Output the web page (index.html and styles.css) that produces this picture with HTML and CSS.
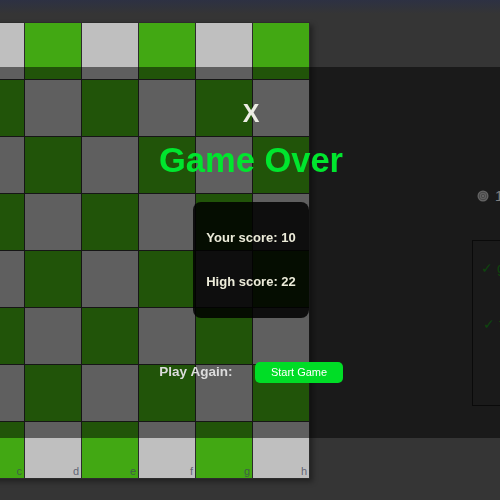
FILE: index.html
```html
<!DOCTYPE html>
<html lang="en">
<head>
<meta charset="utf-8">
<title>Game Over</title>
<link rel="stylesheet" href="styles.css">
</head>
<body>
<div class="page">
  <div class="board">
    <div class="cell l"></div><div class="cell d"></div><div class="cell l"></div><div class="cell d"></div><div class="cell l"></div><div class="cell d"></div><div class="cell l"></div><div class="cell d"></div>
    <div class="cell d"></div><div class="cell l"></div><div class="cell d"></div><div class="cell l"></div><div class="cell d"></div><div class="cell l"></div><div class="cell d"></div><div class="cell l"></div>
    <div class="cell l"></div><div class="cell d"></div><div class="cell l"></div><div class="cell d"></div><div class="cell l"></div><div class="cell d"></div><div class="cell l"></div><div class="cell d"></div>
    <div class="cell d"></div><div class="cell l"></div><div class="cell d"></div><div class="cell l"></div><div class="cell d"></div><div class="cell l"></div><div class="cell d"></div><div class="cell l"></div>
    <div class="cell l"></div><div class="cell d"></div><div class="cell l"></div><div class="cell d"></div><div class="cell l"></div><div class="cell d"></div><div class="cell l"></div><div class="cell d"></div>
    <div class="cell d"></div><div class="cell l"></div><div class="cell d"></div><div class="cell l"></div><div class="cell d"></div><div class="cell l"></div><div class="cell d"></div><div class="cell l"></div>
    <div class="cell l"></div><div class="cell d"></div><div class="cell l"></div><div class="cell d"></div><div class="cell l"></div><div class="cell d"></div><div class="cell l"></div><div class="cell d"></div>
    <div class="cell d"></div><div class="cell l"></div><div class="cell d"><span class="file">c</span></div><div class="cell l"><span class="file">d</span></div><div class="cell d"><span class="file">e</span></div><div class="cell l"><span class="file">f</span></div><div class="cell d"><span class="file">g</span></div><div class="cell l"><span class="file">h</span></div>
  </div>
  <aside class="side">
    <div class="stats">
      <svg class="target" width="12" height="12" viewBox="0 0 12 12" aria-hidden="true">
        <circle cx="6" cy="6" r="5.5" fill="#c8c8c8"/>
        <circle cx="6" cy="6" r="3.8" fill="none" stroke="#8a8a8a" stroke-width="1"/>
        <circle cx="6" cy="6" r="1.8" fill="none" stroke="#8a8a8a" stroke-width="1"/>
      </svg>
      <span class="count">1</span>
    </div>
    <div class="moves">
      <div class="move">✓ g4</div>
      <div class="move alt">✓ f5</div>
    </div>
  </aside>
</div>

<div class="overlay">
  <div class="close">X</div>
  <h1 class="title">Game Over</h1>
  <div class="scores">
    <p>Your score: 10</p>
    <p>High score: 22</p>
  </div>
  <div class="again">
    <span class="again-label">Play Again:</span>
    <button class="start">Start Game</button>
  </div>
</div>
</body>
</html>
```

FILE: styles.css
```css
html, body {
  margin: 0;
  height: 100%;
}

body {
  overflow: hidden;
  background: linear-gradient(to bottom, #2d3143 0px, #353535 14px) no-repeat, #353535;
  font-family: "Liberation Sans", Arial, sans-serif;
}

.page {
  display: flex;
  align-items: flex-start;
}

.board {
  flex: none;
  margin: 22px 0 0 -147px;
  display: grid;
  grid-template-columns: repeat(8, 56px);
  grid-auto-rows: 56px;
  gap: 1px;
  padding: 1px;
  background: #2c2c2c;
  box-shadow: 3px 3px 5px rgba(0, 0, 0, 0.35);
}

.cell {
  display: flex;
  align-items: flex-end;
  justify-content: flex-end;
  padding: 0 2px 1px 0;
  box-sizing: border-box;
}

.cell.l { background: #bfbfbf; }
.cell.d { background: #42a813; }

.file {
  font-size: 11px;
  line-height: 11px;
  color: rgba(62, 68, 88, 0.75);
}

.side {
  flex: none;
  margin: 188px 0 0 162px;
  display: flex;
  flex-direction: column;
}

.stats {
  display: flex;
  align-items: center;
  gap: 6px;
  margin-left: 5px;
  height: 16px;
  font-size: 15px;
  line-height: 16px;
  color: #ffffff;
}

.target { display: block; }

.moves {
  margin-top: 36px;
  width: 200px;
  height: 166px;
  box-sizing: border-box;
  border: 1px solid #141414;
  padding-top: 18px;
}

.move {
  padding-left: 8px;
  font-size: 14px;
  line-height: 18px;
  color: #1a8c1a;
}

.move.alt {
  margin-top: 38px;
  padding-left: 10px;
}

.overlay {
  position: fixed;
  left: 0;
  right: 0;
  top: 67px;
  height: 371px;
  box-sizing: border-box;
  padding: 34px 0 0 2px;
  background: rgba(0, 0, 0, 0.5);
  display: flex;
  flex-direction: column;
  align-items: center;
  font-family: "Liberation Sans", Arial, sans-serif;
}

.close {
  font-size: 25px;
  line-height: 25px;
  font-weight: bold;
  color: #ececE4;
}

.title {
  margin: 17px 0 0;
  font-size: 34.5px;
  line-height: 34.5px;
  font-weight: bold;
  color: #00e62e;
}

.scores {
  margin-top: 24px;
  width: 116px;
  box-sizing: border-box;
  padding: 28px 0;
  display: flex;
  flex-direction: column;
  gap: 28px;
  background: rgba(0, 0, 0, 0.85);
  border-radius: 8px;
  text-align: center;
}

.scores p {
  margin: 0;
  font-size: 13px;
  line-height: 16px;
  font-weight: bold;
  color: #ecebd9;
}

.again {
  margin-top: 44px;
  display: flex;
  align-items: baseline;
  gap: 23px;
}

.again-label {
  font-size: 13.5px;
  line-height: 16px;
  font-weight: bold;
  color: #dcdcdc;
}

.start {
  height: 21px;
  padding: 0 15.5px;
  border: none;
  border-radius: 5px;
  background: #00dd26;
  color: #ffffff;
  font-family: "Liberation Sans", Arial, sans-serif;
  font-size: 11px;
  line-height: 21px;
}
```
